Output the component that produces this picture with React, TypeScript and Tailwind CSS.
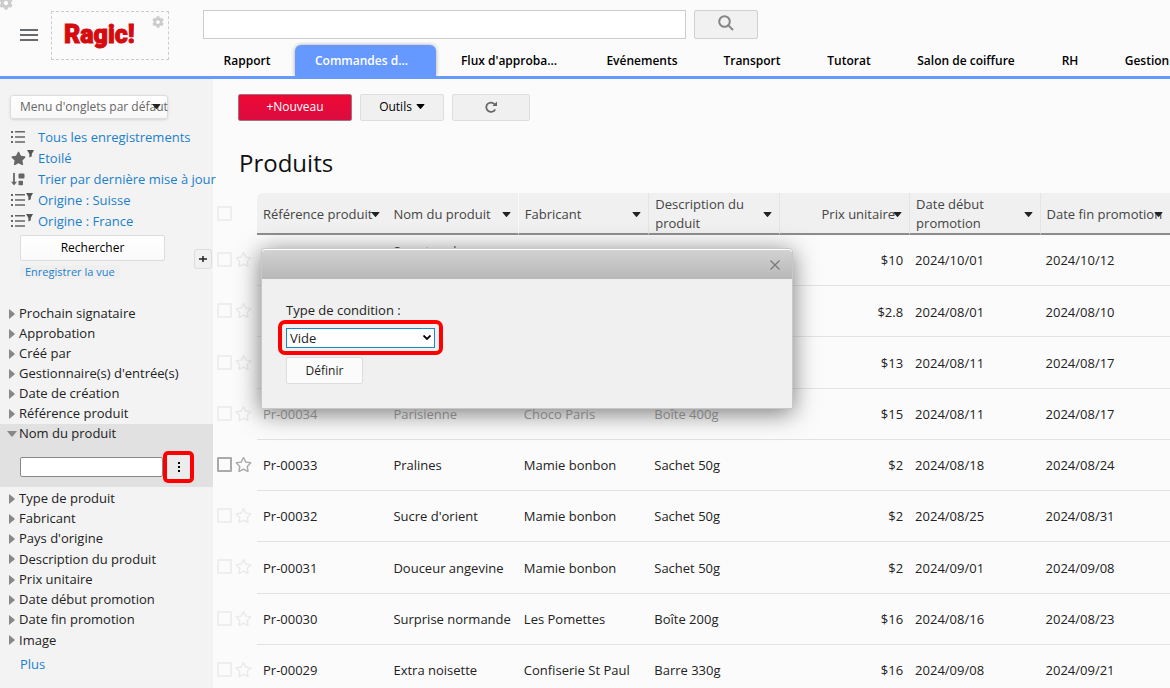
import React from "react";
import { FaCog, FaStar, FaRegStar } from "react-icons/fa";

const tabs = [
  { label: "Rapport", box: "w-[92px] pr-1" },
  { label: "Commandes d...", box: "w-[141px]", active: true },
  { label: "Flux d'approba...", box: "w-[146px]" },
  { label: "Evénements", box: "w-[120px]" },
  { label: "Transport", box: "w-[100px]" },
  { label: "Tutorat", box: "w-[94px]" },
  { label: "Salon de coiffure", box: "w-[140px]" },
  { label: "RH", box: "w-[68px]" },
  { label: "Gestion", box: "w-[86px]" },
];

const filtersTop = [
  "Prochain signataire",
  "Approbation",
  "Créé par",
  "Gestionnaire(s) d'entrée(s)",
  "Date de création",
  "Référence produit",
];

const filtersBottom = [
  "Type de produit",
  "Fabricant",
  "Pays d'origine",
  "Description du produit",
  "Prix unitaire",
  "Date début promotion",
  "Date fin promotion",
  "Image",
];

const columns = [
  { label: "Référence produit", cls: "text-left whitespace-nowrap rounded-tl-md" },
  { label: "Nom du produit", cls: "text-left" },
  { label: "Fabricant", cls: "text-left border-l border-[#fafafa]" },
  { label: "Description du produit", cls: "text-left border-l border-[#e4e4e4]" },
  { label: "Prix unitaire", cls: "text-right border-l border-[#e4e4e4]" },
  { label: "Date début promotion", cls: "text-left border-l border-[#e4e4e4]" },
  { label: "Date fin promotion", cls: "text-left whitespace-nowrap border-l border-[#e4e4e4]" },
];

const rows = [
  ["", "Sweet and", "", "", "$10", "2024/10/01", "2024/10/12"],
  ["", "", "", "", "$2.8", "2024/08/01", "2024/08/10"],
  ["", "", "", "", "$13", "2024/08/11", "2024/08/17"],
  ["Pr-00034", "Parisienne", "Choco Paris", "Boîte 400g", "$15", "2024/08/11", "2024/08/17"],
  ["Pr-00033", "Pralines", "Mamie bonbon", "Sachet 50g", "$2", "2024/08/18", "2024/08/24"],
  ["Pr-00032", "Sucre d'orient", "Mamie bonbon", "Sachet 50g", "$2", "2024/08/25", "2024/08/31"],
  ["Pr-00031", "Douceur angevine", "Mamie bonbon", "Sachet 50g", "$2", "2024/09/01", "2024/09/08"],
  ["Pr-00030", "Surprise normande", "Les Pomettes", "Boîte 200g", "$16", "2024/08/16", "2024/08/23"],
  ["Pr-00029", "Extra noisette", "Confiserie St Paul", "Barre 330g", "$16", "2024/09/08", "2024/09/21"],
];

function Caret({ className = "" }: { className?: string }) {
  return (
    <svg viewBox="0 0 10 6" className={`h-[5px] w-[9px] shrink-0 fill-current ${className}`} aria-hidden="true">
      <path d="M0.6 0h8.8q.6.3.2.8L5.5 5.6q-.5.5-1 0L.4.8Q0 .3.6 0z" />
    </svg>
  );
}

function ListIcon() {
  return (
    <svg viewBox="0 0 14 12" className="mb-[2px] h-3 w-[14px] shrink-0 fill-[#666]" aria-hidden="true">
      <path d="M0 0h2v2H0zM4 0h10v1.5H4zM0 5h2v2H0zM4 5.2h10v1.5H4zM0 10h2v2H0zM4 10.2h10v1.5H4z" />
    </svg>
  );
}

function SortIcon() {
  return (
    <svg viewBox="0 0 14 13" className="h-[13px] w-[14px] shrink-0 fill-[#666]" aria-hidden="true">
      <path d="M2.100 0h1.800v8.800h2.100L3 12.600 0 8.800h2.100zM7.500 1.500q0-1 1-1h4q1 0 1 1v3q0 1-1 1h-4q-1 0-1-1zM7.500 8.500q0-.8.800-.8h2.900q.8 0 .8.800v2.900q0 .8-.8.800H8.300q-.8 0-.8-.8z" />
    </svg>
  );
}

function Funnel() {
  return (
    <svg viewBox="0 0 7 8" className="-mt-px h-2 w-[7px] shrink-0 self-start fill-[#555]" aria-hidden="true">
      <path d="M0 0h7L4.8 4v2.200L2.400 7.500V4z" />
    </svg>
  );
}

function Triangle({ open = false }: { open?: boolean }) {
  return (
    <span className="flex w-[19px] shrink-0 items-center pl-[7px]">
      {open ? (
        <svg viewBox="0 0 10 6" className="h-[6px] w-[10px] fill-[#888]" aria-hidden="true">
          <path d="M0 0h10L5.6 5.6h-1.200z" />
        </svg>
      ) : (
        <svg viewBox="0 0 6 10" className="ml-[2px] h-[10px] w-[6px] fill-[#888]" aria-hidden="true">
          <path d="M0 0l5.600 4.400v1.200L0 10z" />
        </svg>
      )}
    </span>
  );
}

function View({ icon, funnel, children }: { icon: React.ReactNode; funnel?: boolean; children: string }) {
  return (
    <li className="flex h-[21px] items-center">
      <span className="flex w-[27px] shrink-0 items-center gap-px">
        {icon}
        {funnel && <Funnel />}
      </span>
      <a href="#vue" className="whitespace-nowrap text-[#1a80cc]">
        {children}
      </a>
    </li>
  );
}

function Filter({ label, open }: { label: string; open?: boolean }) {
  return (
    <button type="button" className="flex h-5 w-full items-center whitespace-nowrap text-left text-[#222]">
      <Triangle open={open} />
      {label}
    </button>
  );
}

function Header() {
  return (
    <header className="relative flex h-[79px] border-b-[3px] border-[#6699ff] bg-[#fbfbfb]">
      <FaCog className="absolute -left-px -top-1 size-[14px] text-[#ccc]" />
      <div className="flex w-[203px] shrink-0 items-start pl-5 pt-[11px]">
        <button type="button" aria-label="Menu" className="mt-[18px] flex h-3 w-[18px] flex-col justify-between">
          <span className="h-[2px] w-full bg-[#666b70]" />
          <span className="h-[2px] w-full bg-[#666b70]" />
          <span className="h-[2px] w-full bg-[#666b70]" />
        </button>
        <div className="relative ml-[13px] h-[49px] w-[118px] border border-dashed border-[#ccc]">
          <svg viewBox="0 0 70 30" className="ml-3 mt-[7px] h-[30px] w-[70px]" role="img" aria-label="Ragic!">
            <text x="0" y="24" fontSize="25" fontWeight="900" fontFamily="'Liberation Sans Narrow', 'Roboto', sans-serif" fill="#d60b10" stroke="#d60b10" strokeWidth="1">
              Ragic!
            </text>
          </svg>
          <FaCog className="absolute right-1 top-1 size-3 text-[#ccc]" />
        </div>
      </div>
      <div className="flex min-w-0 flex-1 flex-col justify-between pt-[10px]">
        <form className="flex gap-2" onSubmit={(e) => e.preventDefault()}>
          <input type="search" aria-label="Rechercher dans la base" className="h-[29px] w-[483px] border border-[#ccc] bg-white px-2 outline-none" />
          <button type="submit" aria-label="Rechercher" className="flex h-[29px] w-16 items-center justify-center rounded-[2px] border border-[#d0d0d0] bg-[#f1f1f1]">
            <svg viewBox="0 0 16 16" className="mb-1 size-4 fill-none stroke-[#858585]" strokeWidth="2" aria-hidden="true">
              <circle cx="6.500" cy="6.500" r="5.300" />
              <path d="M10.400 10.400L15 15" />
            </svg>
          </button>
        </form>
        <nav className="flex overflow-hidden pt-[3px]">
          {tabs.map((t) => (
            <a
              key={t.label}
              href="#onglet"
              className={`flex h-[31px] shrink-0 items-center justify-center whitespace-nowrap text-[12px] font-semibold ${t.box} ${
                t.active ? "rounded-t-md bg-[#6699ff] pr-2 text-white shadow-[0_0_4px_#0005]" : "text-black"
              }`}
            >
              {t.label}
            </a>
          ))}
        </nav>
      </div>
    </header>
  );
}

function Sidebar() {
  return (
    <aside className="relative w-[213px] shrink-0 bg-[#f3f3f3] pt-4">
      <div className="relative ml-[10px] w-[158px]">
        <button type="button" className="flex h-6 w-full items-center whitespace-nowrap rounded-[3px] border border-[#ddd] bg-gradient-to-b from-white to-[#f8f8f8] pl-[9px] text-[12px] text-[#666] shadow-sm">
          Menu d'onglets par défaut
        </button>
        <Caret className="absolute right-[7px] top-[9px] text-[#222]" />
      </div>
      <ul className="mt-2 pl-[11px]">
        <View icon={<ListIcon />}>Tous les enregistrements</View>
        <View icon={<FaStar className="size-[15px] shrink-0 text-[#666]" />} funnel>Etoilé</View>
        <View icon={<SortIcon />}>Trier par dernière mise à jour</View>
        <View icon={<ListIcon />} funnel>Origine : Suisse</View>
        <View icon={<ListIcon />} funnel>Origine : France</View>
      </ul>
      <button type="button" className="ml-5 mt-[3px] block h-[26px] w-[145px] rounded-[2px] border border-[#ddd] bg-gradient-to-b from-white to-[#fafafa] text-[12px] leading-5 text-black">
        Rechercher
      </button>
      <a href="#enregistrer" className="ml-5 mt-1 inline-block bg-[#efefef] px-[5px] text-[11px] leading-[14px] text-[#1a80cc]">
        Enregistrer la vue
      </a>
      <button type="button" aria-label="Ajouter" className="absolute right-[1px] top-[170px] flex h-5 w-[18px] items-center justify-center rounded-[3px] border border-[#ddd] bg-[#f0f0f0]">
        <svg viewBox="0 0 8 8" className="size-2 stroke-[#222]" strokeWidth="1.5" aria-hidden="true">
          <path d="M4 1v6M0 4h8" />
        </svg>
      </button>
      <div className="mt-[22px] flex h-[120px] flex-col">
        {filtersTop.map((f) => (
          <Filter key={f} label={f} />
        ))}
      </div>
      <div className="h-[63px] bg-[#e1e1e1]">
        <Filter label="Nom du produit" open />
        <div className="flex items-center pl-5 pt-[7px]">
          <input aria-label="Nom du produit" className="h-5 w-[143px] rounded-[2px] border border-[#888] bg-white px-1 outline-none" />
          <button type="button" aria-label="Options" className="flex h-8 w-[31px] flex-col items-center justify-center gap-[2px] rounded-[5px] border-4 border-[#ff0000] bg-[#ececec]">
            <span className="size-[2px] bg-black" />
            <span className="size-[2px] bg-black" />
            <span className="size-[2px] bg-black" />
          </button>
        </div>
      </div>
      <div className="mt-[2px] flex h-[162px] flex-col justify-between">
        {filtersBottom.map((f) => (
          <Filter key={f} label={f} />
        ))}
      </div>
      <a href="#plus" className="ml-5 mt-1 inline-block text-[#1a80cc]">
        Plus
      </a>
    </aside>
  );
}

function Dialog() {
  return (
    <div role="dialog" aria-label="Type de condition" className="absolute left-[261px] top-[248px] w-[532px] rounded-t-[4px] border border-[#c8c8c8] bg-[#f0f0f0] shadow-[0_4px_24px_#777]">
      <div className="flex h-[30px] items-center justify-end rounded-t-[4px] border-t border-white bg-gradient-to-b from-[#d2d2d2] to-[#b8b8b8] pr-3">
        <button type="button" aria-label="Fermer">
          <svg viewBox="0 0 10 10" className="size-[10px] stroke-[#777]" strokeWidth="1.200" aria-hidden="true">
            <path d="M0.500 0.500l9 9M9.500 0.500l-9 9" />
          </svg>
        </button>
      </div>
      <div className="h-[129px] pl-4 pt-[22px] text-[#222]">
        <label htmlFor="condition" className="ml-2 block leading-[19px]">
          Type de condition :
        </label>
        <div className="relative h-[35px] w-[165px] rounded-[7px] border-4 border-[#ff0000] p-1">
          <select id="condition" className="block h-[20px] w-full appearance-none border border-[#1a88cc] bg-white pl-[3px] text-[13px] leading-[18px] text-[#222] outline-none">
            <option>Vide</option>
          </select>
          <svg viewBox="0 0 8 5" className="pointer-events-none absolute right-2 top-[11px] h-[5px] w-2 fill-none stroke-black" strokeWidth="1.800" aria-hidden="true">
            <path d="M0.500 0.500L4 4l3.500-3.500" />
          </svg>
        </div>
        <button type="button" className="ml-2 mt-[2px] block h-[27px] w-[77px] rounded-[2px] border border-[#ddd] bg-[#fbfbfb] text-[12px]">
          Définir
        </button>
      </div>
    </div>
  );
}

function ProductTable() {
  return (
    <table className="mt-[11px] h-[503px] w-full table-fixed border-separate border-spacing-0">
      <thead>
        <tr className="h-[42px]">
          <th className="w-11 pb-[2px] pl-1 text-left">
            <input type="checkbox" aria-label="Tout sélectionner" className="block size-[15px] appearance-none rounded-[1px] border-2 border-[#eee]" />
          </th>
          {columns.map((c) => (
            <th key={c.label} scope="col" className={`relative border-b-2 border-b-[#8c8c8c] bg-[#f0f0f0] pb-0 pl-[6px] pr-[14px] pt-[2px] align-middle font-normal leading-[19px] text-[#444] ${c.cls}`}>
              {c.label}
              <Caret className="absolute right-[7px] top-[19px] text-[#222]" />
            </th>
          ))}
        </tr>
      </thead>
      <tbody>
        {rows.map((r, n) => {
          const tone = n === 4 ? "text-[#aaa] border-[#aaa]" : "text-[#eaeaea] border-[#eee]";
          return (
            <tr key={n} className="h-[51px]">
              <td className="pb-[2px] pl-1">
                <div className="flex items-center gap-[3px]">
                  <input type="checkbox" aria-label={`Sélectionner la ligne ${n + 1}`} className={`block size-[15px] shrink-0 appearance-none rounded-[1px] border-2 ${tone}`} />
                  <button type="button" aria-label={`Favori ligne ${n + 1}`} className={tone}>
                    <FaRegStar className="size-[17px]" />
                  </button>
                </div>
              </td>
              {r.map((v, i) => (
                <td
                  key={i}
                  className={`whitespace-nowrap border-b border-[#e2e2e2] px-[6px] ${n === 3 && i < 4 ? "text-[#888]" : "text-[#222]"} ${i === 4 ? "text-right" : ""} ${
                    n === 0 && i === 1 ? "pt-[7px] align-top" : "pt-[2px]"
                  }`}
                >
                  {v}
                </td>
              ))}
            </tr>
          );
        })}
      </tbody>
    </table>
  );
}

export default function App() {
  return (
    <div className="relative flex h-screen flex-col overflow-hidden bg-[#fbfbfb] font-['Open_Sans',sans-serif] text-[13px]">
      <Header />
      <div className="flex min-h-0 flex-1">
        <Sidebar />
        <main className="min-w-0 flex-1 pt-[15px]">
          <div className="flex gap-2 pl-[25px]">
            <button type="button" className="h-[27px] w-[114px] rounded-[2px] border border-[#a0747c] bg-gradient-to-b from-[#ee0833] to-[#dc0b40] pb-[2px] text-[12px] text-white">
              +Nouveau
            </button>
            <button type="button" className="flex h-[27px] w-[84px] items-center justify-center gap-1 rounded-[2px] border border-[#ddd] bg-[#f0f0f0] pb-[2px] text-[12px] text-black">
              Outils <Caret />
            </button>
            <button type="button" aria-label="Actualiser" className="flex h-[27px] w-[78px] items-center justify-center rounded-[2px] border border-[#ddd] bg-[#f0f0f0] pb-[2px]">
              <svg viewBox="0 0 12 12" className="size-3" aria-hidden="true">
                <path d="M9.800 3.500A4.700 4.700 0 1 0 10.200 8.300" fill="none" stroke="#666" strokeWidth="1.700" />
                <path d="M12 .5V5H7.500z" fill="#666" />
              </svg>
            </button>
          </div>
          <h1 className="mt-[23px] pl-[26px] text-[24px] leading-[38px] text-[#111]">Produits</h1>
          <ProductTable />
        </main>
      </div>
      <Dialog />
    </div>
  );
}
